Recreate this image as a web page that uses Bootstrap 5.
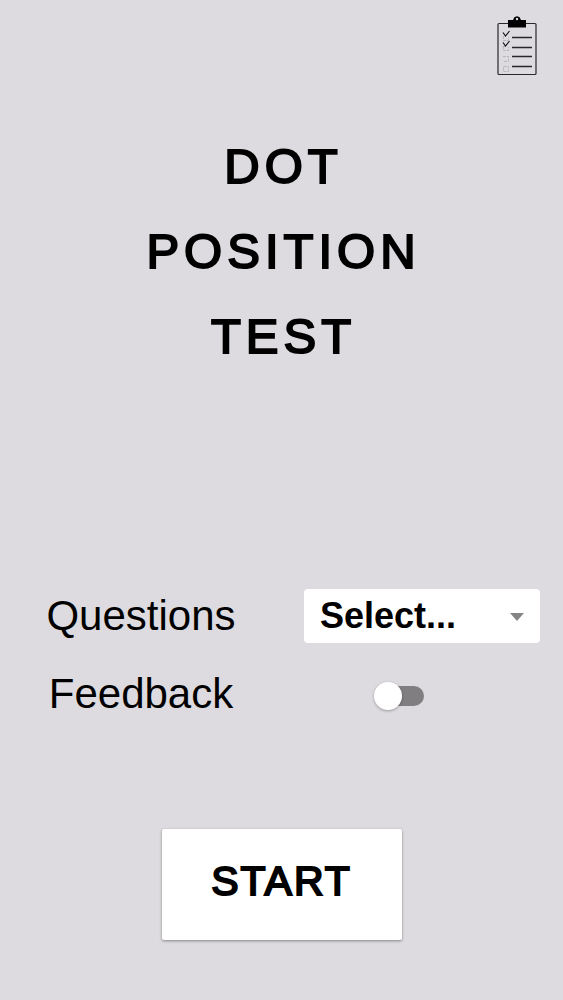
<!DOCTYPE html>
<html lang="en">
<head>
<meta charset="utf-8">
<meta name="viewport" content="width=device-width, initial-scale=1">
<title>Dot Position Test</title>
<link href="https://cdn.jsdelivr.net/npm/bootstrap@5.3.0/dist/css/bootstrap.min.css" rel="stylesheet">
<style>
  body { background: #dddbdf; color: #000; font-family: "Liberation Sans", Arial, sans-serif; }
  .results-btn { line-height: 0; }
  .test-title, .start-btn { font-weight: 400; -webkit-text-stroke: 2px #000; }
  .test-title { font-size: 49px; line-height: 85px; letter-spacing: 5px; padding-left: 4px; }
  .setting-label { font-size: 42px; line-height: 54px; }
  .settings { padding: 0 23px 0 24px; row-gap: 24px; margin-bottom: 60px; }
  .select-col { padding-left: 22px; }
  .toggle-col { padding-right: 24px; }
  .count-select {
    height: 54px; border: 0; border-radius: 4px; padding: 0 48px 0 16px;
    font-size: 36px; line-height: 54px; font-weight: 700; color: #000; background-color: #fff;
    background-image: url("data:image/svg+xml,%3csvg xmlns='http://www.w3.org/2000/svg' viewBox='0 0 14 8'%3e%3cpath fill='%23858585' d='M0 0h14L7 8z'/%3e%3c/svg%3e");
    background-size: 14px 8px; background-position: right 16px top 24px;
  }
  .toggle { width: 50px; height: 28px; margin: 4px 0 0; appearance: none; display: block; position: relative; }
  .toggle::before { content: ""; position: absolute; inset: 4px 0 4px 4px; border-radius: 10px; background: #807e80; }
  .toggle::after { content: ""; position: absolute; left: 0; top: 0; width: 28px; height: 28px; border-radius: 50%;
    background: #fff; box-shadow: 0 1px 3px rgba(0,0,0,.3); }
  .toggle:checked::before { background: #5a7fc0; }
  .toggle:checked::after { left: 22px; }
  .start-btn { width: 240px; height: 111px; border-radius: 2px; background: #fff; color: #000;
    font-size: 41px; letter-spacing: 2px; box-shadow: 0 1px 3px rgba(0,0,0,.4); padding: 0 0 6px; }
  .start-btn:hover { background: #f4f4f4; }
  .start-row { padding-bottom: 60px; }
</style>
</head>
<body>
<main class="d-flex flex-column min-vh-100">
  <header class="d-flex justify-content-end pt-3 px-4">
    <button type="button" class="btn results-btn p-0 border-0" aria-label="Results">
      <svg width="44" height="60" viewBox="0 0 44 60" fill="none" aria-hidden="true">
        <rect x="3" y="7.500" width="38" height="51" rx="1" stroke="#29272b" stroke-width="1.200"/>
        <path d="M13 4h5.500a3.600 3.600 0 0 1 7 0H31v7.500H13z" fill="#000"/>
        <path d="M18.800 4a3.200 3.200 0 0 1 6.400 0" fill="#000" stroke="#000" stroke-width="1"/>
        <circle cx="22" cy="3" r="1.200" fill="#dddbdf"/>
        <path d="M17 21.500h20M17 31.500h20M17 40.500h20M17 50.500h20" stroke="#29272b" stroke-width="1.300"/>
        <path d="M8.500 20v4.500h5V21M8.500 30v4.500h5V31M7.500 30.500h4M8 40.500h5.500v5H8M8.500 50.500h5v5h-5z" stroke="#aeacb0" stroke-width=".8" stroke-dasharray="3 1"/>
        <path d="M8 16.500l2.500 3.500L14.500 15M8 26.500l2.500 3.500L14.500 25" stroke="#111" stroke-width="1.200"/>
      </svg>
    </button>
  </header>
  <h1 class="test-title text-center mt-5 mb-0">DOT<br>POSITION<br>TEST</h1>
  <form class="d-flex flex-column flex-grow-1 justify-content-end">
    <div class="row g-0 settings align-items-center">
      <div class="col-6 d-flex pe-4"><label class="setting-label mx-auto" for="questions">Questions</label></div>
      <div class="col-6 select-col">
        <select id="questions" class="form-select count-select">
          <option selected>Select...</option>
        </select>
      </div>
      <div class="col-6 d-flex pe-4"><label class="setting-label mx-auto" for="feedback">Feedback</label></div>
      <div class="col-6 d-flex justify-content-center toggle-col">
        <input class="toggle" type="checkbox" role="switch" id="feedback">
      </div>
    </div>
    <div class="d-flex justify-content-center pt-5 start-row">
      <button type="button" class="btn border-0 start-btn">START</button>
    </div>
  </form>
</main>
<script src="https://cdn.jsdelivr.net/npm/bootstrap@5.3.0/dist/js/bootstrap.bundle.min.js"></script>
</body>
</html>
